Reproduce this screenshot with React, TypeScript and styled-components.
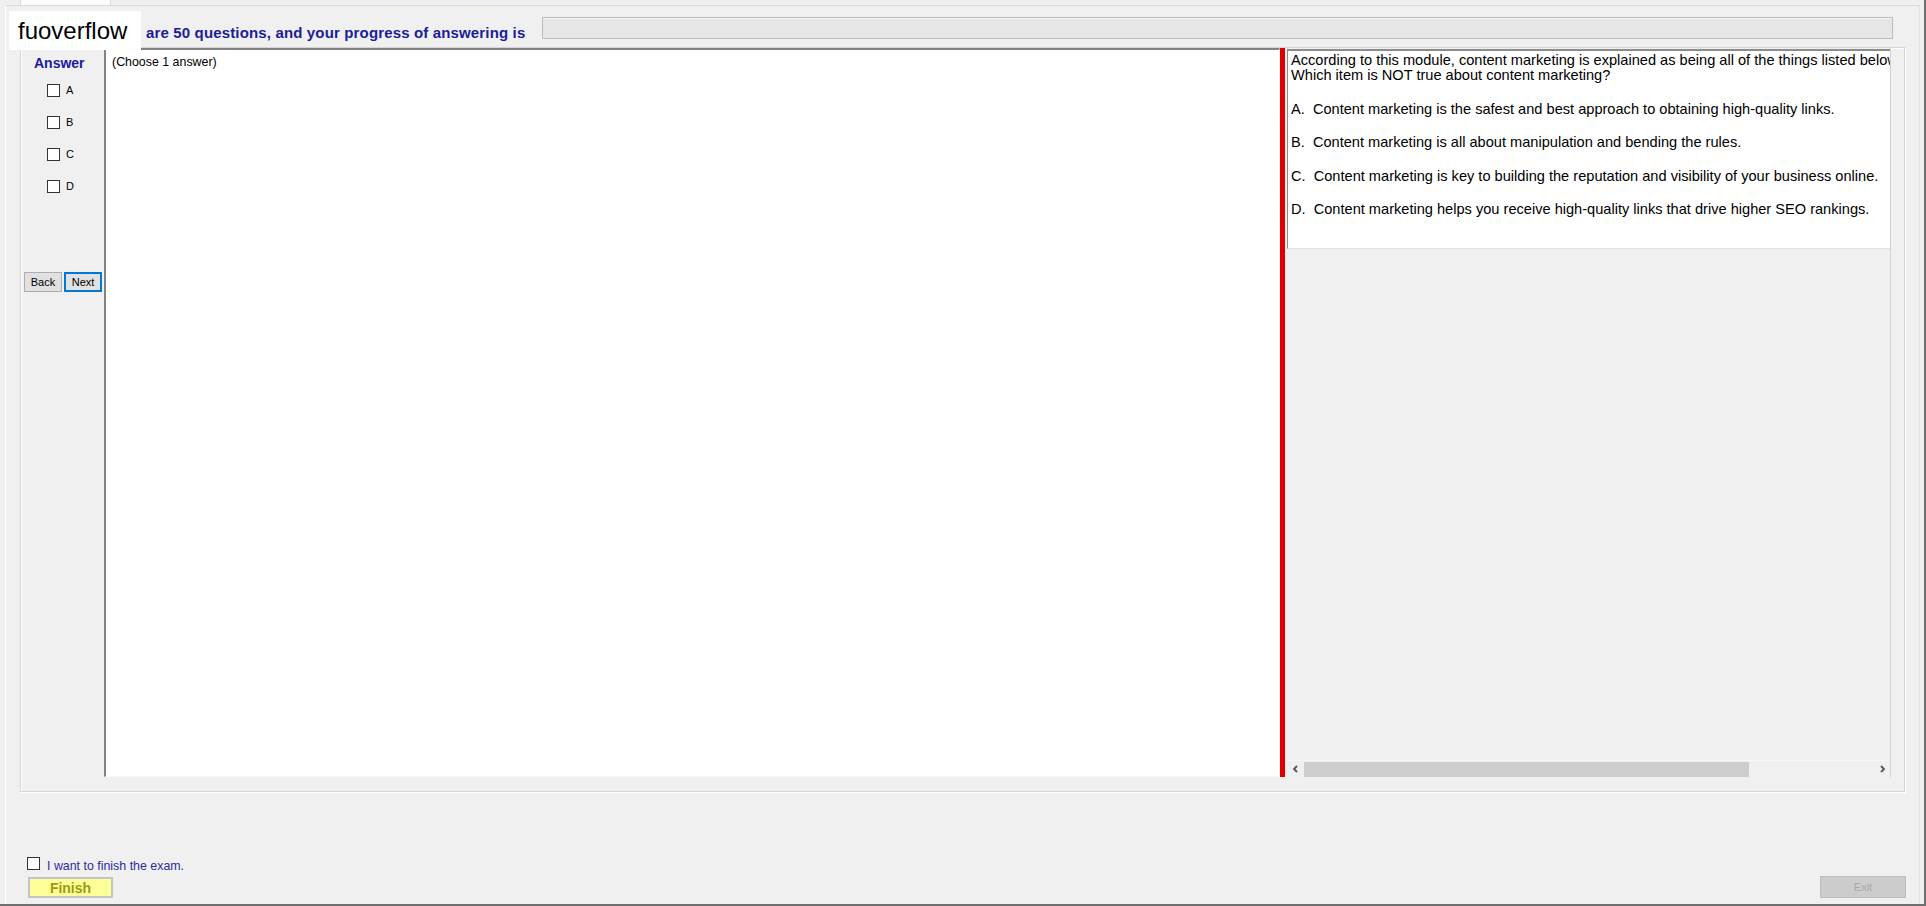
import React from "react";
import styled, { createGlobalStyle } from "styled-components";

const GlobalStyle = createGlobalStyle`
  html, body {
    margin: 0;
    padding: 0;
    background: #f0f0f0;
  }
  body {
    font-family: "Liberation Sans", Arial, sans-serif;
  }
  * {
    box-sizing: border-box;
  }
`;

const OPTIONS = ["A", "B", "C", "D"];

const QUESTION = [
  "A.  Content marketing is the safest and best approach to obtaining high-quality links.",
  "B.  Content marketing is all about manipulation and bending the rules.",
  "C.  Content marketing is key to building the reputation and visibility of your business online.",
  "D.  Content marketing helps you receive high-quality links that drive higher SEO rankings.",
];

const Chevron = ({ dir }: { dir: "left" | "right" }) => (
  <svg width="8" height="8" viewBox="0 0 8 8">
    <polyline
      points={dir === "left" ? "5,1 2,4 5,7" : "3,1 6,4 3,7"}
      fill="none"
      stroke="#555555"
      strokeWidth="1.8"
    />
  </svg>
);

const App = () => {
  return (
    <Window>
      <GlobalStyle />
      <TabStrip>
        <Tab />
      </TabStrip>
      <TabPage>
        <Header>
          <Title>are 50 questions, and your progress of answering is</Title>
          <Progress />
        </Header>

        <GroupBox>
          <AnswerCol>
            <AnswerTitle>Answer</AnswerTitle>
            <OptionList>
              {OPTIONS.map((o) => (
                <OptionRow key={o}>
                  <CheckBox />
                  <OptionLabel>{o}</OptionLabel>
                </OptionRow>
              ))}
            </OptionList>
            <NavRow>
              <NavButton>Back</NavButton>
              <NavButton $focused>Next</NavButton>
            </NavRow>
          </AnswerCol>

          <MiddlePanel>
            <Hint>(Choose 1 answer)</Hint>
          </MiddlePanel>

          <Splitter />

          <RightPanel>
            <Viewport>
              <Doc>
                <Lead>
                  According to this module, content marketing is explained as
                  being all of the things listed below, except one.
                  <br />
                  Which item is NOT true about content marketing?
                </Lead>
                {QUESTION.map((q) => (
                  <Choice key={q}>{q}</Choice>
                ))}
              </Doc>
            </Viewport>
            <HScroll>
              <ScrollArrow>
                <Chevron dir="left" />
              </ScrollArrow>
              <ScrollTrack>
                <ScrollThumb />
              </ScrollTrack>
              <ScrollArrow>
                <Chevron dir="right" />
              </ScrollArrow>
            </HScroll>
          </RightPanel>
        </GroupBox>

        <Footer>
          <FinishBlock>
            <FinishCheckRow>
              <CheckBox />
              <FinishText>I want to finish the exam.</FinishText>
            </FinishCheckRow>
            <FinishButton>Finish</FinishButton>
          </FinishBlock>
          <ExitButton disabled>Exit</ExitButton>
        </Footer>
      </TabPage>

      <Watermark>fuoverflow</Watermark>
    </Window>
  );
};

export default App;

const Window = styled.div`
  position: relative;
  width: 1926px;
  height: 906px;
  background: #f0f0f0;
  border-right: 2px solid #6f6f6f;
  border-bottom: 2px solid #6f6f6f;
  display: flex;
  flex-direction: column;
  overflow: hidden;
`;

const TabStrip = styled.div`
  height: 5px;
  display: flex;
`;

const Tab = styled.div`
  margin-left: 20px;
  width: 91px;
  height: 5px;
  background: #fbfbfb;
  border-left: 1px solid #d9d9d9;
  border-right: 1px solid #d9d9d9;
`;

const TabPage = styled.div`
  flex: 1;
  margin: 0 4px 0 5px;
  border-top: 1px solid #dadada;
  border-left: 1px solid #ffffff;
  border-right: 1px solid #e3e3e3;
  padding: 0 14px;
  display: flex;
  flex-direction: column;
`;

const Header = styled.div`
  height: 41px;
  display: flex;
  align-items: flex-start;
`;

const Title = styled.div`
  width: 522px;
  flex-shrink: 0;
  padding-left: 126px;
  margin-top: 19px;
  font-size: 15px;
  letter-spacing: 0.15px;
  line-height: 16px;
  font-weight: bold;
  color: #1c1c9a;
  white-space: nowrap;
`;

const Progress = styled.div`
  margin-top: 11px;
  width: 1351px;
  height: 22px;
  background: #e6e6e6;
  border: 1px solid #bcbcbc;
  box-shadow: inset 0 1px 0 #f4f4f4;
`;

const GroupBox = styled.div`
  height: 745px;
  border: 1px solid #d5d5d5;
  box-shadow: inset 1px 1px 0 #ffffff, 1px 1px 0 #ffffff;
  padding: 0 13px 14px 4px;
  display: flex;
  align-items: stretch;
`;

const AnswerCol = styled.div`
  width: 79px;
  flex-shrink: 0;
  display: flex;
  flex-direction: column;
  padding-top: 8px;
`;

const AnswerTitle = styled.div`
  padding-left: 9px;
  font-size: 14px;
  line-height: 14px;
  font-weight: bold;
  color: #1a1aa0;
`;

const OptionList = styled.div`
  margin-top: 14px;
  padding-left: 22px;
  display: flex;
  flex-direction: column;
  gap: 19px;
`;

const OptionRow = styled.label`
  height: 13px;
  display: flex;
  align-items: center;
  gap: 6px;
`;

const CheckBox = styled.span`
  display: inline-block;
  width: 13px;
  height: 13px;
  flex-shrink: 0;
  background: #ffffff;
  border: 1px solid #333333;
`;

const OptionLabel = styled.span`
  font-size: 11px;
  line-height: 13px;
  color: #000000;
`;

const NavRow = styled.div`
  margin-top: 79px;
  margin-left: -1px;
  display: flex;
  gap: 2px;
`;

const NavButton = styled.button<{ $focused?: boolean }>`
  width: 38px;
  height: 20px;
  padding: 0;
  font-family: inherit;
  font-size: 11px;
  color: #000000;
  background: #e1e1e1;
  border: 1px solid ${(p) => (p.$focused ? "#0078d7" : "#adadad")};
  box-shadow: ${(p) => (p.$focused ? "inset 0 0 0 1px #0078d7" : "none")};
`;

const MiddlePanel = styled.div`
  width: 1176px;
  flex-shrink: 0;
  background: #ffffff;
  border-top: 2px solid #828282;
  border-left: 2px solid #828282;
  border-right: 1px solid #f7f7f7;
  border-bottom: 1px solid #f7f7f7;
  padding: 5px 0 0 6px;
`;

const Hint = styled.div`
  font-size: 12.4px;
  line-height: 14px;
  color: #000000;
`;

const Splitter = styled.div`
  width: 5px;
  flex-shrink: 0;
  margin-right: 2px;
  background: #dd0000;
`;

const RightPanel = styled.div`
  width: 604px;
  flex-shrink: 0;
  display: flex;
  flex-direction: column;
  background: #f0f0f0;
  border-right: 1px solid #d2d2d2;
`;

const Viewport = styled.div`
  flex: 1;
  overflow: hidden;
  padding-top: 1px;
`;

const Doc = styled.div`
  width: 760px;
  height: 200px;
  background: #ffffff;
  border-top: 2px solid #8c8c8c;
  border-left: 1px solid #8c8c8c;
  border-bottom: 1px solid #e2e2e2;
  padding: 2px 0 0 3px;
  font-size: 14.6px;
  line-height: 16px;
  color: #000000;
  white-space: pre;
`;

const Lead = styled.div`
  line-height: 15px;
`;

const Choice = styled.p`
  margin: 17.5px 0 0;
`;

const HScroll = styled.div`
  height: 17px;
  display: flex;
  align-items: stretch;
  background: #f0f0f0;
  border-top: 1px solid #f7f7f7;
`;

const ScrollArrow = styled.div`
  width: 17px;
  display: flex;
  align-items: center;
  justify-content: center;
`;

const ScrollTrack = styled.div`
  flex: 1;
  display: flex;
  align-items: center;
`;

const ScrollThumb = styled.div`
  width: 445px;
  height: 15px;
  background: #cdcdcd;
`;

const Footer = styled.div`
  margin-top: 65px;
  margin-right: -1px;
  padding-left: 7px;
  display: flex;
  justify-content: space-between;
  align-items: flex-end;
`;

const FinishBlock = styled.div`
  display: flex;
  flex-direction: column;
`;

const FinishCheckRow = styled.label`
  display: flex;
  align-items: flex-start;
  gap: 7px;
`;

const FinishText = styled.span`
  margin-top: 3px;
  font-size: 12.4px;
  line-height: 13px;
  color: #2b2b9f;
`;

const FinishButton = styled.button`
  margin-top: 4px;
  margin-left: 1px;
  width: 85px;
  height: 21px;
  padding: 0;
  font-family: inherit;
  font-size: 14px;
  font-weight: bold;
  color: #9a9a10;
  background: #ffff99;
  border: 2px solid #c4c4c4;
`;

const ExitButton = styled.button`
  width: 86px;
  height: 22px;
  padding: 0;
  font-family: inherit;
  font-size: 11px;
  color: #a8a8a8;
  background: #cccccc;
  border: 1px solid #bcbcbc;
`;

const Watermark = styled.div`
  position: absolute;
  left: 9px;
  top: 11px;
  width: 132px;
  height: 39px;
  padding-left: 9px;
  background: #ffffff;
  font-size: 24px;
  line-height: 39px;
  color: #000000;
`;
